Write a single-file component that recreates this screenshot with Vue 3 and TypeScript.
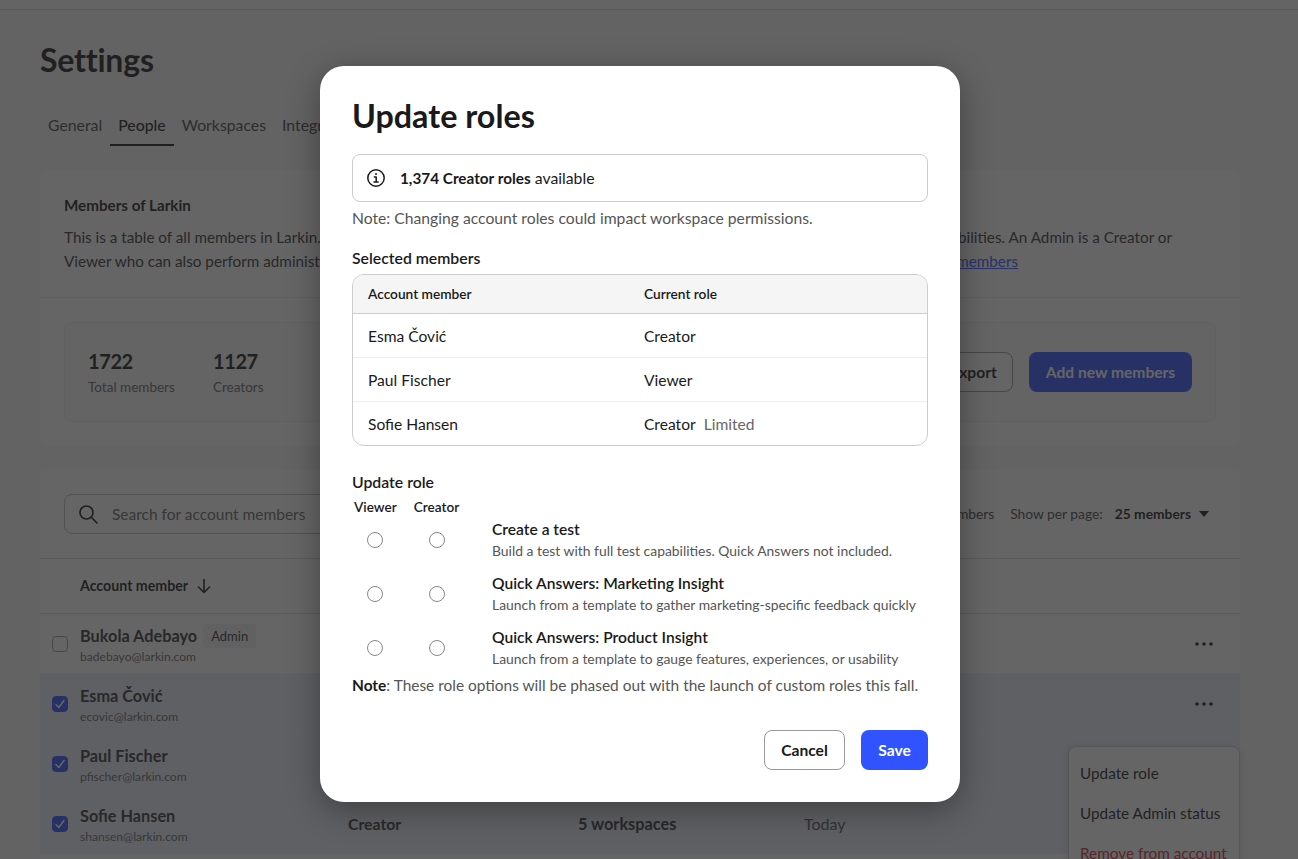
<script setup lang="ts">
interface Member { name: string; email: string; checked: boolean; admin?: boolean; dots?: boolean; role?: string; spaces?: string; last?: string }
const members: Member[] = [
  { name: 'Bukola Adebayo', email: 'badebayo@larkin.com', checked: false, admin: true, dots: true },
  { name: 'Esma Čović', email: 'ecovic@larkin.com', checked: true, dots: true },
  { name: 'Paul Fischer', email: 'pfischer@larkin.com', checked: true },
  { name: 'Sofie Hansen', email: 'shansen@larkin.com', checked: true, role: 'Creator', spaces: '5 workspaces', last: 'Today' },
]
const selected = [
  { name: 'Esma Čović', role: 'Creator', note: '' },
  { name: 'Paul Fischer', role: 'Viewer', note: '' },
  { name: 'Sofie Hansen', role: 'Creator', note: 'Limited' },
]
const options = [
  { title: 'Create a test', desc: 'Build a test with full test capabilities. Quick Answers not included.' },
  { title: 'Quick Answers: Marketing Insight', desc: 'Launch from a template to gather marketing-specific feedback quickly' },
  { title: 'Quick Answers: Product Insight', desc: 'Launch from a template to gauge features, experiences, or usability' },
]
const tabs = ['General', 'People', 'Workspaces', 'Integrations']
</script>

<template>
  <div class="page">
    <div class="topbar"></div>
    <main class="main">
      <h1 class="h1">Settings</h1>
      <nav class="tabs">
        <span v-for="t in tabs" :key="t" class="tab" :class="{ on: t === 'People' }">{{ t }}</span>
      </nav>

      <section class="card">
        <div class="intro">
          <h2 class="intro-title">Members of Larkin</h2>
          <div class="line l1"><span>This is a table of all members in Larkin.</span><span>capabilities. An Admin is a Creator or</span></div>
          <div class="line l2"><span class="clip">Viewer who can also perform administrative tasks.</span><a class="link">members</a></div>
        </div>
        <div class="stats-wrap">
          <div class="stats">
            <div class="stat s1"><b>1722</b><span>Total members</span></div>
            <div class="stat"><b>1127</b><span>Creators</span></div>
            <div class="stat-actions">
              <button class="btn ghost">Export</button>
              <button class="btn primary">Add new members</button>
            </div>
          </div>
        </div>
      </section>

      <section class="card table-card">
        <div class="toolbar">
          <div class="search">
            <svg width="22" height="22" viewBox="0 0 22 22" fill="none" stroke="#1a1a1a" stroke-width="1.7" stroke-linecap="round"><circle cx="9.5" cy="9.5" r="6.5"/><path d="M14.5 14.5 20 20"/></svg>
            <span>Search for account members</span>
          </div>
          <span class="count">members</span>
          <span class="per">Show per page:</span>
          <b class="per-val">25 members</b>
          <svg class="caret" width="10" height="6" viewBox="0 0 10 6"><path d="M0 0h10L5 6z" fill="#1a1a1a"/></svg>
        </div>
        <div class="thead">
          <b>Account member</b>
          <svg width="16" height="16" viewBox="0 0 16 16" fill="none" stroke="#1a1a1a" stroke-width="1.6" stroke-linecap="round" stroke-linejoin="round"><path d="M8 1.5v13M2.5 9 8 14.5 13.500 9"/></svg>
        </div>
        <div v-for="m in members" :key="m.name" class="row" :class="{ sel: m.checked }">
          <span class="check" :class="{ on: m.checked }">
            <svg v-if="m.checked" width="12" height="12" viewBox="0 0 12 12" fill="none" stroke="#fff" stroke-width="1.5" stroke-linecap="round" stroke-linejoin="round"><path d="M2 6.500 4.800 9.500 10 2.500"/></svg>
          </span>
          <div class="who">
            <div class="who-name"><b>{{ m.name }}</b><span v-if="m.admin" class="badge">Admin</span></div>
            <div class="who-mail">{{ m.email }}</div>
          </div>
          <b class="c-role">{{ m.role }}</b>
          <b class="c-spaces">{{ m.spaces }}</b>
          <span class="c-last">{{ m.last }}</span>
          <svg v-if="m.dots" class="dots" width="20" height="4" viewBox="0 0 20 4" fill="#1a1a1a"><circle cx="3" cy="2" r="1.800"/><circle cx="10" cy="2" r="1.800"/><circle cx="17" cy="2" r="1.800"/></svg>
        </div>
        <div class="menu">
          <div class="menu-item">Update role</div>
          <div class="menu-item">Update Admin status</div>
          <div class="menu-item red">Remove from account</div>
        </div>
      </section>
    </main>

    <div class="overlay"></div>

    <div class="modal">
      <h2 class="m-title">Update roles</h2>
      <div class="info">
        <svg width="20" height="20" viewBox="0 0 20 20" fill="none" stroke="#1a1a1a" stroke-width="1.500"><circle cx="10" cy="10" r="8.200"/><path d="M8.300 9h1.900v5M8 14h4.200" stroke-linecap="round" stroke-linejoin="round"/><circle cx="10" cy="6" r="1" fill="#1a1a1a" stroke="none"/></svg>
        <span><b>1,374 Creator roles</b> available</span>
      </div>
      <p class="note">Note: Changing account roles could impact workspace permissions.</p>
      <h3 class="label sel-label">Selected members</h3>
      <div class="m-table">
        <div class="m-row m-head"><b>Account member</b><b>Current role</b></div>
        <div v-for="s in selected" :key="s.name" class="m-row">
          <span>{{ s.name }}</span>
          <span>{{ s.role }}<em v-if="s.note" class="limited">{{ s.note }}</em></span>
        </div>
      </div>
      <h3 class="label upd-label">Update role</h3>
      <div class="role-cols"><b>Viewer</b><b>Creator</b></div>
      <div v-for="o in options" :key="o.title" class="opt">
        <span class="radio r1"></span>
        <span class="radio r2"></span>
        <div class="opt-text">
          <div class="opt-title">{{ o.title }}</div>
          <div class="opt-desc">{{ o.desc }}</div>
        </div>
      </div>
      <p class="foot-note"><b>Note</b>: These role options will be phased out with the launch of custom roles this fall.</p>
      <div class="actions">
        <button class="btn cancel">Cancel</button>
        <button class="btn save">Save</button>
      </div>
    </div>
  </div>
</template>

<style>
html, body { margin: 0; overflow: hidden; }
</style>

<style scoped>
* { box-sizing: border-box; }
.page {
  position: relative; width: 1298px; height: 859px; overflow: hidden;
  background: #f8f8f8; color: #1a1a1a;
  font-family: Lato, "Open Sans", sans-serif; font-size: 15px; line-height: 24px;
}
.topbar { height: 10px; background: #fbfbfb; border-bottom: 1px solid #ddd; }
.main { padding: 0 58px 0 40px; }
.h1 { margin: 30px 0 25px; font-size: 32px; line-height: 40px; font-weight: 700; letter-spacing: -.2px; }
.tabs { display: flex; height: 41px; white-space: nowrap; }
.tab { padding: 8px 8px 0; height: 41px; font-size: 15.800px; color: #444; }
.tab.on { color: #1a1a1a; font-weight: 500; border-bottom: 2px solid #1a1a1a; }
.card { margin-top: 24px; background: #fff; border-radius: 8px; width: 1200px; }
.intro { padding: 23px 24px 23px; border-bottom: 1px solid #eee; height: 128px; font-size: 15.250px; }
.intro-title { margin: 0; font-size: 15.200px; font-weight: 700; line-height: 24px; margin-bottom: 8px; }
.line { display: flex; justify-content: space-between; color: #333; height: 24px; white-space: nowrap; }
.l1 { width: 1108px; }
.l2 { width: 954px; }
.clip { width: 280px; overflow: hidden; }
.link { color: #3053ff; text-decoration: underline; }
.stats-wrap { padding: 24px; height: 148px; }
.stats { display: flex; align-items: center; height: 100px; padding: 0 23px; border: 1px solid #eee; border-radius: 8px; background: #fbfbfb; }
.stat { display: flex; flex-direction: column; margin-top: 2px; }
.stat.s1 { width: 125px; }
.stat b { font-size: 20px; line-height: 28px; font-weight: 700; letter-spacing: -.4px; }
.stat span { font-size: 13.500px; line-height: 24px; color: #666; }
.stat-actions { margin-left: auto; display: flex; gap: 16px; }
.btn { height: 40px; border-radius: 8px; font: inherit; font-weight: 700; font-size: 15.600px; cursor: pointer; padding: 0; }
.ghost { width: 79px; background: #fff; border: 1px solid #999; color: #1a1a1a; }
.primary { width: 163px; background: #3053ff; border: 0; color: #fff; }
.table-card { position: relative; height: 420px; margin-top: 24px; }
.toolbar { display: flex; align-items: center; height: 89px; padding: 0 31px 0 24px; border-bottom: 1px solid #ddd; font-size: 13.800px; white-space: nowrap; }
.search { display: flex; align-items: center; gap: 13px; width: 560px; height: 40px; padding-left: 12px; border: 1px solid #bbb; border-radius: 8px; font-size: 15.500px; color: #666; }
.search span { margin-top: -1px; }
.count { margin-left: auto; color: #444; }
.per { margin-left: 16px; color: #444; }
.per-val { margin-left: 12px; font-weight: 700; }
.caret { margin-left: 8px; }
.thead { display: flex; align-items: center; gap: 8px; height: 55px; padding-left: 40px; border-bottom: 1px solid #ddd; font-size: 14.200px; }
.thead b { font-weight: 700; }
.row { display: flex; align-items: center; height: 60px; position: relative; border-bottom: 1px solid #f0f0f0; }
.row.sel { background: #eaeef8; }
.check { width: 16px; height: 16px; margin-left: 12px; border: 1.500px solid #999; border-radius: 4px; background: #fff; display: flex; align-items: center; justify-content: center; flex: none; }
.check.on { background: #3053ff; border-color: #3053ff; }
.who { margin-left: 12px; margin-top: 2px; width: 268px; flex: none; }
.who-name { display: flex; align-items: center; gap: 6px; height: 24px; }
.who-name b { font-size: 16.300px; font-weight: 700; color: #333; }
.badge { padding: 0 8px; height: 24px; border-radius: 4px; background: #f0f0f0; font-size: 13px; color: #333; }
.who-mail { font-size: 12.100px; line-height: 16px; color: #666; margin-top: 1px; }
.c-role { width: 230px; flex: none; font-weight: 700; color: #333; font-size: 15.800px; }
.c-spaces { width: 226px; flex: none; font-weight: 700; color: #333; font-size: 16.300px; }
.c-last { color: #555; font-size: 16px; }
.dots { position: absolute; left: 1154px; top: 28px; }
.menu { position: absolute; left: 1028px; top: 276px; width: 172px; height: 150px; padding: 6px 0; background: #fff; border: 1px solid #ccc; border-radius: 8px; box-shadow: 0 2px 8px rgba(0,0,0,.15); }
.menu-item { height: 40px; padding: 8px 11px; white-space: nowrap; color: #1a1a1a; font-size: 15.300px; }
.menu-item.red { color: #d6263d; }

.overlay { position: absolute; inset: 0; background: rgba(36, 36, 36, .7); }
.modal { position: absolute; left: 320px; top: 66px; width: 640px; height: 736px; padding: 32px; background: #fff; border-radius: 24px; box-shadow: 0 8px 32px rgba(0,0,0,.35); font-size: 15.700px; }
.m-title { margin: -1px 0 0; font-size: 32.300px; line-height: 38px; font-weight: 700; }
.info { display: flex; align-items: center; gap: 14px; height: 48px; margin-top: 19px; padding-left: 13px; border: 1px solid #ccc; border-radius: 8px; font-size: 15.800px; }
.info b { font-weight: 700; font-size: 15.300px; }
.note { margin: 4px 0 0; color: #555; }
.label { margin: 0; font-size: 15.800px; line-height: 24px; font-weight: 600; }
.sel-label { margin-top: 16px; }
.m-table { margin-top: 4px; border: 1px solid #ccc; border-radius: 12px; overflow: hidden; height: 172px; }
.m-row { display: grid; grid-template-columns: 276px 1fr; align-items: center; height: 44px; padding-left: 15px; border-top: 1px solid #eee; font-size: 15.600px; }
.m-row:first-child { border-top: 0; }
.m-head { height: 39px; background: #f5f5f5; border-bottom: 1px solid #ccc; font-size: 13.700px; }
.m-head b { margin-top: -1px; }
.m-head + .m-row { border-top: 0; height: 43px; }
.m-head b { font-weight: 600; }
.limited { font-style: normal; color: #666; margin-left: 8px; }
.upd-label { margin-top: 24px; }
.role-cols { display: flex; height: 18px; margin-top: 1px; font-size: 13.600px; line-height: 24px; }
.role-cols b { font-weight: 600; padding-left: 2px; }
.role-cols b + b { margin-left: 15px; }
.opt { display: flex; align-items: center; height: 54px; }
.radio { width: 16px; height: 16px; border: 1px solid #888; border-radius: 50%; flex: none; }
.r1 { margin-left: 15px; }
.r2 { margin-left: 46px; }
.opt-text { margin-left: 47px; white-space: nowrap; }
.opt-title { font-weight: 600; line-height: 20px; margin-bottom: 2px; font-size: 15.600px; }
.opt-desc { font-size: 13.900px; line-height: 20px; color: #555; }
.foot-note { margin: -2px 0 0; color: #555; white-space: nowrap; font-size: 15.450px; }
.foot-note b { color: #1a1a1a; font-weight: 700; }
.actions { display: flex; justify-content: flex-end; gap: 16px; margin-top: 33px; }
.cancel { width: 81px; background: #fff; border: 1px solid #999; color: #1a1a1a; }
.save { width: 67px; background: #3053ff; border: 0; color: #fff; }
</style>
